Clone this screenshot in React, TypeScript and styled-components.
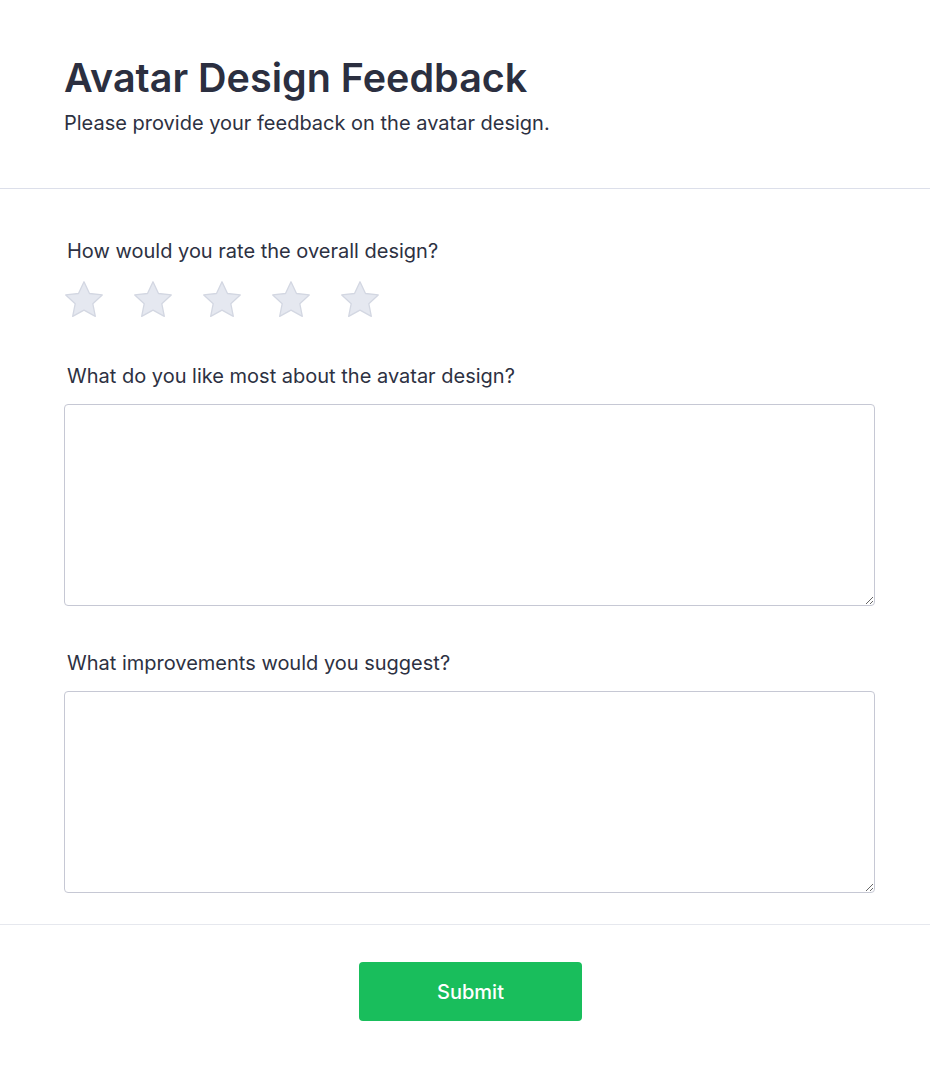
import React, { useState } from 'react';
import styled, { createGlobalStyle } from 'styled-components';

const GlobalStyle = createGlobalStyle`
  * { box-sizing: border-box; }
  body {
    margin: 0;
    background: #ffffff;
    font-family: Inter, "Noto Sans", sans-serif;
    color: #2d3142;
  }
`;

const Page = styled.div`
  width: 930px;
  min-height: 1071px;
  background: #fff;
`;

const Header = styled.header`
  padding: 52px 64px 0;
  height: 189px;
  border-bottom: 1px solid #dcdfea;
`;

const Title = styled.h1`
  margin: 0;
  font-size: 39.5px;
  line-height: 52px;
  font-weight: 600;
  color: #2b2f40;
`;

const Subtitle = styled.p`
  margin: 5px 0 0;
  font-size: 20px;
  line-height: 28px;
  font-weight: 400;
  color: #2d3142;
`;

const Form = styled.form`
  display: flex;
  flex-direction: column;
`;

const Body = styled.div`
  padding: 48px 55px 31px 64px;
  display: flex;
  flex-direction: column;
  gap: 43px;
  border-bottom: 1px solid #e6e8ee;
`;

const Field = styled.div`
  display: flex;
  flex-direction: column;
`;

const Label = styled.label`
  margin-left: 3px;
  font-size: 20px;
  line-height: 28px;
  font-weight: 400;
  color: #2d3142;
`;

const Stars = styled.div`
  display: flex;
  gap: 31px;
  margin-top: 16px;
  margin-left: 1px;
`;

const StarButton = styled.button`
  padding: 0;
  border: 0;
  background: none;
  cursor: pointer;
  width: 38px;
  height: 38px;
  display: flex;
`;

const TextArea = styled.textarea`
  margin-top: 14px;
  width: 100%;
  height: 202px;
  border: 1px solid #c6c8d4;
  border-radius: 4px;
  padding: 10px 12px;
  font-family: inherit;
  font-size: 16px;
  color: #2d3142;
  resize: vertical;
  outline: none;
`;

const Footer = styled.div`
  display: flex;
  justify-content: center;
  padding: 37px 55px 50px 66px;
`;

const SubmitButton = styled.button`
  width: 223px;
  height: 59px;
  border: 0;
  border-radius: 4px;
  background: #19be5c;
  color: #fff;
  font-family: inherit;
  font-size: 20px;
  font-weight: 500;
  cursor: pointer;
`;

const Star = ({ filled }: { filled: boolean }) => (
  <svg width="38" height="38" viewBox="1.8 1.8 20.4 20.4">
    <path
      d="M12 2.2l2.95 6.3 6.85.8-5.08 4.7 1.36 6.8L12 17.4l-6.08 3.4 1.36-6.8L2.2 9.3l6.85-.8z"
      fill={filled ? '#fbbf24' : '#e5e8f0'}
      stroke={filled ? '#f59e0b' : '#d3d7e2'}
      strokeWidth="0.7"
      strokeLinejoin="round"
    />
  </svg>
);

const App = () => {
  const [rating, setRating] = useState<number>(0);
  return (
    <Page>
      <GlobalStyle />
      <Header>
        <Title>Avatar Design Feedback</Title>
        <Subtitle>Please provide your feedback on the avatar design.</Subtitle>
      </Header>
      <Form onSubmit={(e) => e.preventDefault()}>
        <Body>
          <Field>
            <Label>How would you rate the overall design?</Label>
            <Stars>
              {[1, 2, 3, 4, 5].map((n) => (
                <StarButton key={n} type="button" onClick={() => setRating(n)}>
                  <Star filled={n <= rating} />
                </StarButton>
              ))}
            </Stars>
          </Field>
          <Field>
            <Label htmlFor="likes">What do you like most about the avatar design?</Label>
            <TextArea id="likes" />
          </Field>
          <Field>
            <Label htmlFor="improvements">What improvements would you suggest?</Label>
            <TextArea id="improvements" />
          </Field>
        </Body>
        <Footer>
          <SubmitButton type="submit">Submit</SubmitButton>
        </Footer>
      </Form>
    </Page>
  );
};

export default App;
